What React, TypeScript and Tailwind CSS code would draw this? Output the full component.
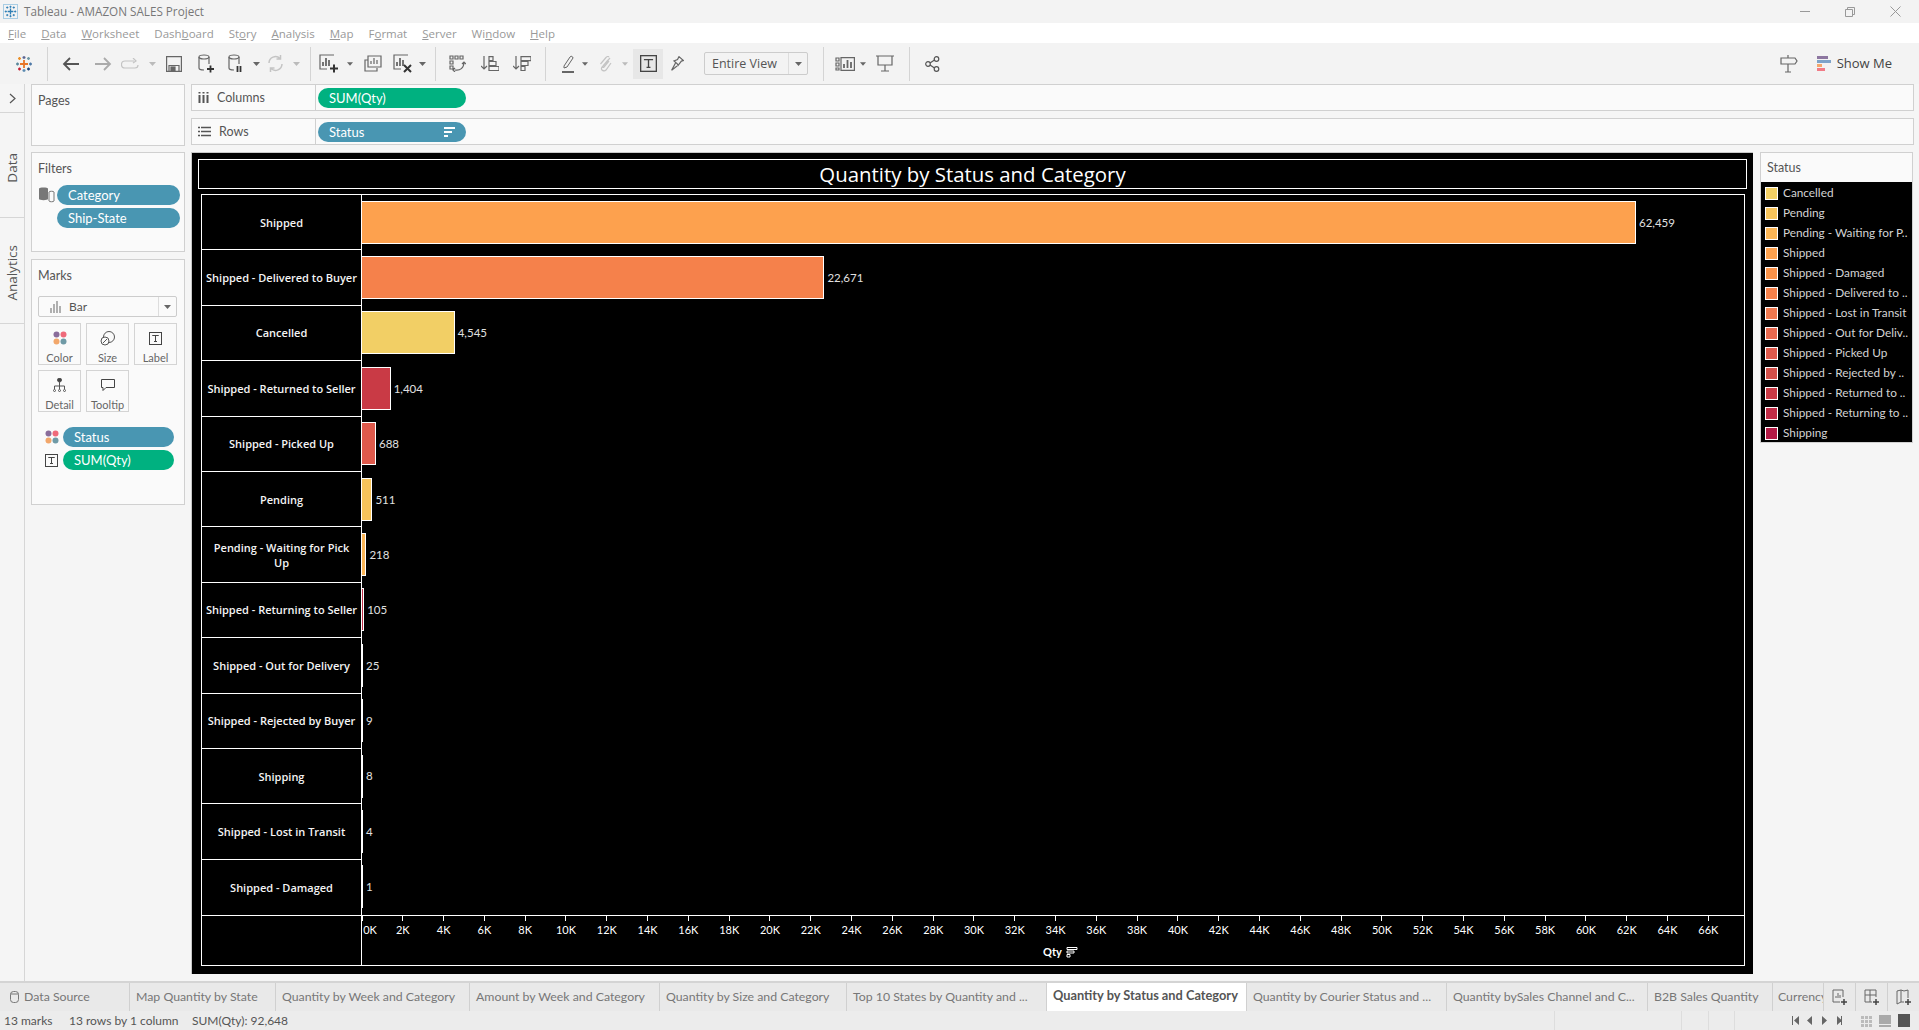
import type { ReactNode } from "react";

const bars = [
  { name: "Shipped", qty: 62459, label: "62,459", color: "bg-[#fda14e]" },
  { name: "Shipped - Delivered to Buyer", qty: 22671, label: "22,671", color: "bg-[#f5814b]" },
  { name: "Cancelled", qty: 4545, label: "4,545", color: "bg-[#f2cf65]" },
  { name: "Shipped - Returned to Seller", qty: 1404, label: "1,404", color: "bg-[#c93a45]" },
  { name: "Shipped - Picked Up", qty: 688, label: "688", color: "bg-[#df5a4c]" },
  { name: "Pending", qty: 511, label: "511", color: "bg-[#f6c35b]" },
  { name: "Pending - Waiting for Pick\nUp", qty: 218, label: "218", color: "bg-[#fbb555]" },
  { name: "Shipped - Returning to Seller", qty: 105, label: "105", color: "bg-[#c02c46]" },
  { name: "Shipped - Out for Delivery", qty: 25, label: "25", color: "bg-[#e7694f]" },
  { name: "Shipped - Rejected by Buyer", qty: 9, label: "9", color: "bg-[#d2504a]" },
  { name: "Shipping", qty: 8, label: "8", color: "bg-[#b31a45]" },
  { name: "Shipped - Lost in Transit", qty: 4, label: "4", color: "bg-[#ef7950]" },
  { name: "Shipped - Damaged", qty: 1, label: "1", color: "bg-[#f99249]" },
];

const legend = [
  { name: "Cancelled", color: "bg-[#f2cf65]" },
  { name: "Pending", color: "bg-[#f6c35b]" },
  { name: "Pending - Waiting for P..", color: "bg-[#fbb555]" },
  { name: "Shipped", color: "bg-[#fda14e]" },
  { name: "Shipped - Damaged", color: "bg-[#f99249]" },
  { name: "Shipped - Delivered to ..", color: "bg-[#f5814b]" },
  { name: "Shipped - Lost in Transit", color: "bg-[#ef7950]" },
  { name: "Shipped - Out for Deliv..", color: "bg-[#e7694f]" },
  { name: "Shipped - Picked Up", color: "bg-[#df5a4c]" },
  { name: "Shipped - Rejected by ..", color: "bg-[#d2504a]" },
  { name: "Shipped - Returned to ..", color: "bg-[#c93a45]" },
  { name: "Shipped - Returning to ..", color: "bg-[#c02c46]" },
  { name: "Shipping", color: "bg-[#b31a45]" },
];

const ticks = Array.from({ length: 34 }, (_, i) => `${i * 2}K`);

const Caret = ({ light }: { light?: boolean }) => (
  <svg width="7" height="4" viewBox="0 0 7 4"><path d="M0 0h7L3.500 4z" fill={light ? "#bbb" : "#666"} /></svg>
);

function TableauLogo({ size = 18, mono }: { size?: number; mono?: boolean }) {
  const c = (color: string) => (mono ? "#2f7fb5" : color);
  return (
    <svg width={size} height={size} viewBox="0 0 18 18" fill="none" strokeWidth="1.300">
      <path d="M9 5v8M5 9h8" stroke={c("#e8762b")} strokeWidth="1.800" />
      <path d="M9 1v3M7.500 2.500h3" stroke={c("#5b6591")} />
      <path d="M9 14v3M7.500 15.500h3" stroke={c("#5a8ab0")} />
      <path d="M1 9h3M2.500 7.500v3" stroke={c("#59879b")} />
      <path d="M14 9h3M15.500 7.500v3" stroke={c("#4e79a7")} />
      <path d="M3 3.500h3M4.500 2v3" stroke={c("#eb912b")} />
      <path d="M12 3.500h3M13.500 2v3" stroke={c("#7099a6")} />
      <path d="M3 14h3M4.500 12.500v3" stroke={c("#c72035")} />
      <path d="M12 14h3M13.500 12.500v3" stroke={c("#1f447a")} />
    </svg>
  );
}

function ColorDots() {
  return (
    <svg width="14" height="14" viewBox="0 0 14 14">
      <circle cx="3.500" cy="3.500" r="3" fill="#8a6d9b" />
      <circle cx="10.500" cy="3.500" r="3" fill="#ef6a7a" />
      <circle cx="3.500" cy="10.500" r="3" fill="#f2a76b" />
      <circle cx="10.500" cy="10.500" r="3" fill="#6f9aa6" />
    </svg>
  );
}

function TextBox({ size = 13 }: { size?: number }) {
  return (
    <svg width={size} height={size} viewBox="0 0 13 13" fill="none" stroke="#444">
      <rect x="0.500" y="0.500" width="12" height="12" />
      <path d="M3.500 4V3.500h6V4M6.500 3.500v6M5 9.500h3" />
    </svg>
  );
}

const Sep = () => <div className="w-px h-[34px] bg-[#d4d4d4] shrink-0" />;

function Slot({ className, children }: { className: string; children: ReactNode }) {
  return <div className={`flex items-center justify-center shrink-0 ${className}`}>{children}</div>;
}

function Toolbar() {
  const s = { fill: "none", stroke: "#666", strokeWidth: 1.200 };
  return (
    <div className="h-[41px] flex items-center bg-[#f3f3f3]">
      <Slot className="w-[47px]"><TableauLogo /></Slot>
      <Sep />
      <Slot className="w-[44px]">
        <svg width="17" height="14" viewBox="0 0 17 14" fill="none" stroke="#555" strokeWidth="1.800"><path d="M17 7H2M8 1L2 7l6 6" /></svg>
      </Slot>
      <Slot className="w-[22px]">
        <svg width="17" height="14" viewBox="0 0 17 14" fill="none" stroke="#aaa" strokeWidth="1.800"><path d="M0 7h15M9 1l6 6-6 6" /></svg>
      </Slot>
      <Slot className="w-[34px]">
        <svg width="20" height="12" viewBox="0 0 20 12" fill="none" stroke="#c4c4c4" strokeWidth="1.200"><path d="M13 3H4a3 3 0 000 7h10a3 3 0 003-3M12 0l3 3-3 2" /></svg>
      </Slot>
      <Slot className="w-[8px]"><Caret light /></Slot>
      <Slot className="w-[36px]">
        <svg width="16" height="16" viewBox="0 0 16 16" {...s}><path d="M.6.6h14.800v14.800H.6zM3 15V9.500h10V15" /><rect x="5" y="11" width="4" height="4" fill="#666" /></svg>
      </Slot>
      <Slot className="w-[28px]">
        <svg width="16" height="19" viewBox="0 0 16 19" {...s}><ellipse cx="6" cy="3" rx="5" ry="2" /><path d="M1 3v11c0 1 2 2 5 2M11 3v7" /><path d="M9 15h7M12.500 11.500v7" stroke="#333" strokeWidth="1.800" /></svg>
      </Slot>
      <Slot className="w-[32px]">
        <svg width="16" height="19" viewBox="0 0 16 19" {...s}><ellipse cx="6" cy="3" rx="5" ry="2" /><path d="M1 3v11c0 1 2 2 5 2M11 3v7" /><path d="M9.500 12v6M12.500 12v6" stroke="#333" strokeWidth="1.800" /></svg>
      </Slot>
      <Slot className="w-[8px]"><Caret /></Slot>
      <Slot className="w-[30px]">
        <svg width="17" height="17" viewBox="0 0 17 17" fill="none" stroke="#c4c4c4" strokeWidth="1.500"><path d="M2 8a6.500 6.500 0 0111-4.500M15 9a6.500 6.500 0 01-11 4.500M13.500 0v4h-4M3.500 17v-4h4" /></svg>
      </Slot>
      <Slot className="w-[12px]"><Caret light /></Slot>
      <div className="w-[8px]" />
      <Sep />
      <Slot className="w-[36px]">
        <svg width="20" height="19" viewBox="0 0 20 19" {...s}><path d="M15 1H1v14h7" /><path d="M4 12V8M7 12V4M10 12V6" strokeWidth="1.800" /><path d="M11 14.500h8M15 10.500v8" stroke="#333" strokeWidth="2" /></svg>
      </Slot>
      <Slot className="w-[6px]"><Caret /></Slot>
      <Slot className="w-[40px]">
        <svg width="18" height="17" viewBox="0 0 18 17" {...s}><path d="M4 1h13v11H4zM7 9V6M10 9V3M13 9V5" /><path d="M4 5H1v11h12v-3" /></svg>
      </Slot>
      <Slot className="w-[20px]">
        <svg width="20" height="19" viewBox="0 0 20 19" {...s}><path d="M15 1H1v14h7" /><path d="M4 12V8M7 12V4M10 12V6" strokeWidth="1.800" /><path d="M11 11l7 7M18 11l-7 7" stroke="#333" strokeWidth="2" /></svg>
      </Slot>
      <Slot className="w-[18px]"><Caret /></Slot>
      <div className="w-[4px]" />
      <Sep />
      <Slot className="w-[42px]">
        <svg width="17" height="17" viewBox="0 0 17 17" {...s}><path d="M1 1h3v3H1zM6 1h3v3H6zM11 1h3v3h-3zM1 6h3v3H1zM1 11h3v3H1zM6 15c5 1 9-2 9-8M13 9l2-2 2 2M6 13l-2 2 2 2" /></svg>
      </Slot>
      <Slot className="w-[24px]">
        <svg width="18" height="15" viewBox="0 0 18 15" {...s}><path d="M3 0v13M0 10l3 3 3-3" /><path d="M8 .6h4v4H8zM8 5.500h7v4H8zM8 10.500h10v4H8z" /></svg>
      </Slot>
      <Slot className="w-[40px]">
        <svg width="18" height="15" viewBox="0 0 18 15" {...s}><path d="M3 0v13M0 10l3 3 3-3" /><path d="M8 .6h10v4H8zM8 5.500h7v4H8zM8 10.500h4v4H8z" /></svg>
      </Slot>
      <div className="w-[3px]" />
      <Sep />
      <div className="w-[8px]" />
      <Slot className="w-[28px]">
        <svg width="13" height="18" viewBox="0 0 13 18" fill="none" stroke="#666"><path d="M2 11l6-9c1-1.500 3-.5 3 1l-6 9-3 1z" /><path d="M0 17h12" strokeWidth="2" /></svg>
      </Slot>
      <Slot className="w-[6px]"><Caret /></Slot>
      <Slot className="w-[34px]">
        <svg width="13" height="16" viewBox="0 0 13 16" fill="none" stroke="#c4c4c4" strokeWidth="1.200"><path d="M11 2L3 11c-2 3 2 5 4 3l5-7M10 1c-1-1-2-.5-3 .5L1.500 8M9 4l-5 6c-1 1 0 2 1 1l5-6" /></svg>
      </Slot>
      <Slot className="w-[6px]"><Caret light /></Slot>
      <Slot className="w-[30px] h-[30px] bg-[#e7e7e7] ml-[5px]"><TextBox size={17} /></Slot>
      <Slot className="w-[28px]">
        <svg width="13" height="15" viewBox="0 0 13 15" {...s}><path d="M8 .6l4.400 4-2 .5L7 9.500 6.500 8 3 5l3.500-1.500zM4.500 7L.6 14.400 6 10" /></svg>
      </Slot>
      <div className="ml-[13px] w-[104px] h-[23px] rounded-[2px] border border-[#ccc] flex items-center text-[12.500px] text-[#555] font-['Open_Sans',sans-serif]">
        <span className="flex-1 pl-[7px] border-r border-[#ddd] leading-[21px]">Entire View</span>
        <span className="w-[18px] flex justify-center"><Caret /></span>
      </div>
      <div className="w-[15px]" />
      <Sep />
      <div className="w-[6px]" />
      <Slot className="w-[30px]">
        <svg width="20" height="14" viewBox="0 0 20 14" {...s}><path d="M1 1h3v3H1zM1 6h3v3H1zM1 11h3v2H1zM6 .6h13.400v12.800H6z" /><path d="M9 11V7M12.500 11V3M16 11V5" strokeWidth="1.800" /></svg>
      </Slot>
      <Slot className="w-[6px]"><Caret /></Slot>
      <Slot className="w-[38px]">
        <svg width="18" height="17" viewBox="0 0 18 17" {...s}><path d="M0 1h18M2 1v9h14V1M9 10v6M5 16h8" /></svg>
      </Slot>
      <div className="w-[5px]" />
      <Sep />
      <Slot className="w-[44px]">
        <svg width="15" height="16" viewBox="0 0 15 16" fill="none" stroke="#555" strokeWidth="1.200"><circle cx="3" cy="8" r="2.300" /><circle cx="11.500" cy="3" r="2.300" /><circle cx="11.500" cy="13" r="2.300" /><path d="M5 7l4.500-3M5 9l4.500 3" /></svg>
      </Slot>
      <div className="flex-1" />
      <Slot className="w-[20px]">
        <svg width="18" height="18" viewBox="0 0 18 18" {...s}><path d="M1 3h14l2 3-2 3H1zM8 0v3M8 9v8M5 17h6" /></svg>
      </Slot>
      <div className="w-[18px]" />
      <div className="w-[14px] h-[15px] flex flex-col gap-px shrink-0">
        <div className="h-[3px] w-[11px] bg-[#8d76a0]" />
        <div className="h-[3px] w-[14px] bg-[#7ea3c9]" />
        <div className="h-[3px] w-[5px] bg-[#f4a76d]" />
        <div className="h-[3px] w-[8px] bg-[#f17b86]" />
      </div>
      <span className="ml-[6px] mr-[27px] text-[13px] text-[#444] font-['Open_Sans',sans-serif]">Show Me</span>
    </div>
  );
}

function Pill({ children, green, sort, className }: { children: ReactNode; green?: boolean; sort?: boolean; className?: string }) {
  return (
    <div className={`h-[20px] rounded-[10px] flex items-center pl-[11px] pr-[11px] text-[13px] text-white ${green ? "bg-[#00b180]" : "bg-[#4996b2]"} ${className ?? ""}`}>
      <span className="flex-1 leading-[20px]">{children}</span>
      {sort && (
        <svg width="11" height="10" viewBox="0 0 11 10" fill="#fff"><path d="M0 0h11v2H0zM0 4h8v2H0zM0 8h4v2H0z" /></svg>
      )}
    </div>
  );
}

function MarkBtn({ label, children }: { label: string; children: ReactNode }) {
  return (
    <div className="h-[42px] border border-[#d4d4d4] flex flex-col items-center pt-[6px] gap-[5px] text-[11px] text-[#666] leading-[13px]">
      <div className="h-[16px] flex items-center">{children}</div>
      <span>{label}</span>
    </div>
  );
}

function SideCards() {
  return (
    <div className="w-[154px] ml-[6px] flex flex-col shrink-0 text-[#555] font-['Lato',sans-serif]">
      <div className="h-[62px] border border-[#d0d0d0] bg-[#fafafa] pl-[6px] pt-[8px] text-[12.500px] leading-[15px]">Pages</div>
      <div className="h-[100px] mt-[6px] border border-[#d0d0d0] bg-[#fafafa] pl-[6px] pr-[4px] pt-[8px]">
        <div className="text-[12.500px] leading-[15px]">Filters</div>
        <div className="mt-[9px] flex gap-[2px]">
          <svg className="mt-[1px]" width="17" height="17" viewBox="0 0 17 17" fill="none">
            <path d="M1 2.500C1 1 10 1 10 2.500V13c0 1.500-9 1.500-9 0z" fill="#777" />
            <path d="M11 6c0-1 5-1 5 0v9c0 1-5 1-5 0z" stroke="#777" />
          </svg>
          <div className="flex-1 flex flex-col gap-[3px]">
            <Pill>Category</Pill>
            <Pill>Ship-State</Pill>
          </div>
        </div>
      </div>
      <div className="h-[246px] mt-[7px] border border-[#d0d0d0] bg-[#fafafa] pl-[6px] pr-[7px] pt-[8px]">
        <div className="text-[12.500px] leading-[15px]">Marks</div>
        <div className="mt-[13px] h-[21px] border border-[#ccc] rounded-[2px] flex items-center text-[12px]">
          <svg className="ml-[11px]" width="11" height="12" viewBox="0 0 11 12" stroke="#666"><path d="M1 12V7M4 12V3M7 12V0M10 12V5" /></svg>
          <span className="ml-[8px] flex-1">Bar</span>
          <span className="w-[18px] h-full border-l border-[#ddd] flex items-center justify-center"><Caret /></span>
        </div>
        <div className="mt-[6px] grid grid-cols-[43px_43px_43px] gap-x-[5px] gap-y-[5px]">
          <MarkBtn label="Color"><ColorDots /></MarkBtn>
          <MarkBtn label="Size">
            <svg width="15" height="15" viewBox="0 0 15 15" fill="none" stroke="#555"><circle cx="9" cy="6" r="5.500" /><circle cx="5" cy="10" r="4" fill="#fafafa" /><path d="M3 12l4-4" /></svg>
          </MarkBtn>
          <MarkBtn label="Label"><TextBox /></MarkBtn>
          <MarkBtn label="Detail">
            <svg width="13" height="14" viewBox="0 0 13 14" fill="none" stroke="#555"><circle cx="6.500" cy="2" r="2" fill="#444" /><path d="M6.500 4v4M1.500 11V8h10v3M6.500 8v3" /><circle cx="1.500" cy="12.500" r="1" /><circle cx="6.500" cy="12.500" r="1" /><circle cx="11.500" cy="12.500" r="1" /></svg>
          </MarkBtn>
          <MarkBtn label="Tooltip">
            <svg width="14" height="13" viewBox="0 0 14 13" fill="none" stroke="#444"><path d="M.5.5h13v8H5l-3 3v-3H.5z" /></svg>
          </MarkBtn>
        </div>
        <div className="mt-[15px] ml-[7px] mr-[3px] grid grid-cols-[18px_1fr] gap-y-[3px] items-center">
          <ColorDots />
          <Pill>Status</Pill>
          <TextBox />
          <Pill green>SUM(Qty)</Pill>
        </div>
      </div>
    </div>
  );
}

function Shelf({ icon, name, children }: { icon: ReactNode; name: string; children: ReactNode }) {
  return (
    <div className="h-[27px] border border-[#d0d0d0] bg-[#fafafa] flex items-center font-['Lato',sans-serif]">
      <div className="w-[124px] h-full border-r border-[#d0d0d0] flex items-center gap-[7px] pl-[6px] text-[12.500px] text-[#555]">
        {icon}
        <span className="pt-[1px] ml-[1px]">{name}</span>
      </div>
      <div className="ml-[2px] w-[148px]">{children}</div>
    </div>
  );
}

function Chart() {
  return (
    <div className="w-[1562px] h-[822px] shrink-0 bg-black border-l border-t border-[#c8c8c8] pt-[6px] pr-[6px] pl-[6px] font-['Lato',sans-serif]">
      <div className="h-[30px] border border-white flex items-center justify-center text-[20.400px] leading-[28px] font-medium font-['Open_Sans',sans-serif] text-white">
        Quantity by Status and Category
      </div>
      <div className="mt-[5px] ml-[3px] mr-[2px] h-[772px] border border-white flex flex-col">
        <div className="h-[720px] flex flex-col">
          {bars.map((b, i) => (
            <div key={b.name} className="flex-1 flex items-center min-h-0">
              <div className={`w-[160px] h-full shrink-0 border-r border-white flex items-center justify-center text-center whitespace-pre-line text-[11px] leading-[15px] font-semibold font-['Open_Sans',sans-serif] text-[#f4f4f4] ${i < 12 ? "border-b" : ""}`}>
                {b.name}
              </div>
              <div className={`h-[43px] -mt-[1px] border border-l-0 border-white ${b.color}`} style={{ width: (b.qty * 1274) / 62459 }} />
              <span className="ml-[3px] -mt-[1px] text-[11.500px] text-[#e0e0e0]">{b.label}</span>
            </div>
          ))}
        </div>
        <div className="flex-1 border-t border-white flex">
          <div className="w-[160px] shrink-0 border-r border-white" />
          <div className="flex-1 overflow-hidden">
            <div className="flex -ml-[20.400px]">
              {ticks.map((t, i) => (
                <div key={t} className="w-[40.800px] shrink-0 flex flex-col items-center">
                  <div className="w-px h-[5px] bg-white" />
                  <span className={`mt-[2px] text-[11px] leading-[14px] text-white ${i === 0 ? "translate-x-[8px]" : ""}`}>{t}</span>
                </div>
              ))}
            </div>
            <div className="mt-[8px] ml-[681px] flex items-center gap-[4px] text-[11px] leading-[14px] font-bold text-white">
              Qty
              <svg width="12" height="11" viewBox="0 0 12 11" fill="none" stroke="#fff"><path d="M1 .5h10v2H1zM1 4h7v2H1zM1 7.500h3v2.500H1z" /></svg>
            </div>
          </div>
        </div>
      </div>
    </div>
  );
}

function Legend() {
  return (
    <div className="w-[153px] h-[291px] border border-[#d0d0d0] bg-[#fafafa] font-['Lato',sans-serif]">
      <div className="h-[29px] pl-[6px] pt-[2px] flex items-center text-[12.500px] text-[#555]">Status</div>
      <div className="h-[260px] bg-black pl-[4px] pt-[1px]">
        {legend.map((l) => (
          <div key={l.name} className="h-[20px] flex items-center gap-[5px] text-[11.800px] text-[#d4d4d4] whitespace-nowrap">
            <div className={`w-[13px] h-[13px] border border-white shrink-0 ${l.color}`} />
            {l.name}
          </div>
        ))}
      </div>
    </div>
  );
}

function Tabs() {
  const tab = "h-full shrink-0 border-r border-[#d0d0d0] flex items-center pl-[6px] whitespace-nowrap overflow-hidden";
  const icon = "h-full w-[32px] shrink-0 border-r border-[#d0d0d0] flex items-center justify-center";
  return (
    <div className="h-[30px] bg-[#e9e9e9] border-t-2 border-[#d4d4d4] flex text-[12.300px] text-[#777] font-['Lato',sans-serif]">
      <div className={`${tab} w-[130px] gap-[5px] !pl-[10px]`}>
        <svg width="9" height="12" viewBox="0 0 9 12" fill="none" stroke="#777"><rect x="0.500" y="0.500" width="8" height="11" rx="3" /><path d="M.5 3h8" /></svg>
        Data Source
      </div>
      <div className={`${tab} w-[146px]`}>Map Quantity by State</div>
      <div className={`${tab} w-[194px]`}>Quantity by Week and Category</div>
      <div className={`${tab} w-[190px]`}>Amount by Week and Category</div>
      <div className={`${tab} w-[187px]`}>Quantity by Size and Category</div>
      <div className={`${tab} w-[200px]`}>Top 10 States by Quantity and ...</div>
      <div className={`${tab} w-[200px] bg-white font-bold text-[12.800px] text-[#555] pb-[2px]`}>Quantity by Status and Category</div>
      <div className={`${tab} w-[200px]`}>Quantity by Courier Status and ...</div>
      <div className={`${tab} w-[201px]`}>Quantity bySales Channel and C...</div>
      <div className={`${tab} w-[125px]`}>B2B Sales Quantity</div>
      <div className={`${tab} w-[51px] !pl-[5px]`}>Currency</div>
      <div className={icon}>
        <svg width="16" height="16" viewBox="0 0 16 16" fill="none" stroke="#666"><path d="M8 13H1V1h10v7M4 9V7M6 9V4M8 9V6" /><path d="M9 13h6M12 10v6" stroke="#444" strokeWidth="1.500" /></svg>
      </div>
      <div className={icon}>
        <svg width="16" height="16" viewBox="0 0 16 16" fill="none" stroke="#666"><path d="M8 13H1V1h11v7M1 6h11M6 1v12" /><path d="M9 13h6M12 10v6" stroke="#444" strokeWidth="1.500" /></svg>
      </div>
      <div className="h-full flex-1 flex items-center justify-center">
        <svg width="16" height="16" viewBox="0 0 16 16" fill="none" stroke="#666"><path d="M8 13H5L1 15V2l4-1 3 1 4-1v8M5 1v12" /><path d="M9 13h6M12 10v6" stroke="#444" strokeWidth="1.500" /></svg>
      </div>
    </div>
  );
}

function StatusBar() {
  return (
    <div className="h-[19px] bg-[#ececec] flex items-center text-[12px] text-[#555] font-['Lato',sans-serif] whitespace-nowrap">
      <span className="ml-[4px] w-[65px]">13 marks</span>
      <span className="w-[123px]">13 rows by 1 column</span>
      <span className="w-[1362px]">SUM(Qty): 92,648</span>
      <div className="h-full w-[127px] border-l border-[#ddd]" />
      <div className="h-full w-[27px] border-l border-[#ddd]" />
      <div className="h-full w-[26px] border-l border-[#ddd]" />
      <div className="h-full w-[58px] border-l border-[#ddd]" />
      <svg width="50" height="9" viewBox="0 0 50 9" fill="#666"><path d="M0 0h1v9H0zM7 0v9L2 4.500zM20 0v9l-5-4.500zM30 0v9l5-4.500zM45 0v9l5-4.500zM50 0h-1v9h1z" /></svg>
      <div className="ml-[19px] flex items-end gap-[7px]">
        <div className="w-[11px] h-[11px] grid grid-cols-3 gap-px">
          {Array.from({ length: 9 }, (_, i) => <div key={i} className="bg-[#bbb]" />)}
        </div>
        <div className="w-[12px] h-[12px] flex flex-col gap-px">
          <div className="flex-1 bg-[#aaa]" />
          <div className="h-[2px] bg-[#aaa]" />
        </div>
        <div className="w-[12px] h-[13px] bg-[#555]" />
      </div>
    </div>
  );
}

export default function App() {
  return (
    <div className="w-[1919px] h-[1030px] overflow-hidden flex flex-col bg-[#f5f5f5]">
      <div className="h-[23px] flex items-center bg-[#f3f3f3] font-['Open_Sans',sans-serif]">
        <div className="ml-[3px] w-[15px] h-[15px] border border-[#a8cde4] flex items-center justify-center">
          <TableauLogo size={13} mono />
        </div>
        <span className="ml-[6px] text-[11.700px] text-[#777]">Tableau - AMAZON SALES Project</span>
        <div className="flex-1" />
        <svg width="10" height="1" className="mr-[35px]"><path d="M0 .5h10" stroke="#999" /></svg>
        <svg className="mr-[35px]" width="10" height="10" viewBox="0 0 10 10" fill="none" stroke="#999"><path d="M.5 2.500h7v7h-7zM2.500 2.500v-2h7v7h-2" /></svg>
        <svg className="mr-[18px]" width="11" height="11" viewBox="0 0 11 11" stroke="#999"><path d="M.5.5l10 10M10.500.5l-10 10" /></svg>
      </div>
      <div className="h-[20px] bg-white flex items-center pl-[8px] pt-[1px] text-[11.500px] text-[#999] font-['Open_Sans',sans-serif] gap-[15px]">
        <span><u>F</u>ile</span>
        <span><u>D</u>ata</span>
        <span><u>W</u>orksheet</span>
        <span>Dash<u>b</u>oard</span>
        <span>St<u>o</u>ry</span>
        <span><u>A</u>nalysis</span>
        <span><u>M</u>ap</span>
        <span>F<u>o</u>rmat</span>
        <span><u>S</u>erver</span>
        <span>Wi<u>n</u>dow</span>
        <span><u>H</u>elp</span>
      </div>
      <Toolbar />
      <div className="h-[897px] flex">
        <div className="w-[25px] shrink-0 border-r border-[#d6d6d6] flex flex-col text-[#555] font-['Open_Sans',sans-serif] text-[13.500px]">
          <div className="h-[29px] border-b border-[#d6d6d6] flex items-center justify-center">
            <svg width="7" height="11" viewBox="0 0 7 11" fill="none" stroke="#555" strokeWidth="1.200"><path d="M1 1l5 4.500L1 10" /></svg>
          </div>
          <div className="h-[105px] border-b border-[#d6d6d6] flex items-center justify-center pt-[5px]">
            <span className="[writing-mode:vertical-rl] rotate-180">Data</span>
          </div>
          <div className="h-[106px] border-b border-[#d6d6d6] flex items-center justify-center pt-[5px]">
            <span className="[writing-mode:vertical-rl] rotate-180">Analytics</span>
          </div>
        </div>
        <SideCards />
        <div className="ml-[6px] w-[1723px] flex flex-col">
          <Shelf
            name="Columns"
            icon={<svg width="11" height="11" viewBox="0 0 11 11" stroke="#555" strokeWidth="2"><path d="M1.500 3v8M5.500 3v8M9.500 3v8M1.500 0v1.500M5.500 0v1.500M9.500 0v1.500" /></svg>}
          >
            <Pill green>SUM(Qty)</Pill>
          </Shelf>
          <div className="mt-[7px]">
            <Shelf
              name="Rows"
              icon={<svg width="13" height="11" viewBox="0 0 13 11" stroke="#555" strokeWidth="1.500"><path d="M3 1.500h10M3 5.500h10M3 9.500h10M0 1.500h2M0 5.500h2M0 9.500h2" /></svg>}
            >
              <Pill sort>Status</Pill>
            </Shelf>
          </div>
          <div className="mt-[7px] flex gap-[7px]">
            <Chart />
            <Legend />
          </div>
        </div>
      </div>
      <Tabs />
      <StatusBar />
    </div>
  );
}
